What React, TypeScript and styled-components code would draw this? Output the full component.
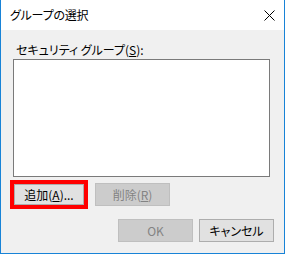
import React from 'react'
import styled, { createGlobalStyle } from 'styled-components'

const GlobalStyle = createGlobalStyle`
  html, body {
    margin: 0;
    padding: 0;
    background: #ffffff;
  }
  body {
    font-family: "Noto Sans CJK JP", "Noto Sans", sans-serif;
    font-feature-settings: "palt";
    font-size: 12px;
    color: #000000;
  }
`

const CloseIcon = () => (
  <svg width='11' height='11' viewBox='0 0 11 11'>
    <path d='M0.5 0.5 L10.5 10.5 M10.5 0.5 L0.5 10.5' stroke='#000' strokeWidth='1' fill='none' />
  </svg>
)

export default function App() {
  return (
    <>
      <GlobalStyle />
      <Div_Window>
        <Div_TitleBar>
          <Span_Title>グループの選択</Span_Title>
          <Div_Close>
            <CloseIcon />
          </Div_Close>
        </Div_TitleBar>
        <Div_Body>
          <Label_Field>
            セキュリティ グループ(<U>S</U>):
          </Label_Field>
          <Div_ListBox />
          <Div_ListActions>
            <Div_Highlight>
              <Button_Dialog $inner>
                追加(<U>A</U>)...
              </Button_Dialog>
            </Div_Highlight>
            <Button_Dialog disabled>
              削除(<U>R</U>)
            </Button_Dialog>
          </Div_ListActions>
          <Div_Footer>
            <Button_Dialog disabled>OK</Button_Dialog>
            <Button_Dialog>キャンセル</Button_Dialog>
          </Div_Footer>
        </Div_Body>
      </Div_Window>
    </>
  )
}

const Div_Window = styled.div`
  width: 285px;
  height: 254px;
  box-sizing: border-box;
  border: 1px solid #1883d7;
  border-top: none;
  display: flex;
  flex-direction: column;
  background: #f0f0f0;
`

const Div_TitleBar = styled.div`
  height: 30px;
  flex: 0 0 30px;
  background: #ffffff;
  display: flex;
  align-items: center;
  justify-content: space-between;
  padding: 0 9px 0 9px;
`

const Span_Title = styled.span`
  font-size: 12px;
  line-height: 30px;
  letter-spacing: -0.2px;
`

const Div_Close = styled.div`
  width: 11px;
  height: 11px;
  display: flex;
  margin-top: 1px;
`

const Div_Body = styled.div`
  flex: 1;
  display: flex;
  flex-direction: column;
  padding: 12px 12px 0 12px;
`

const Label_Field = styled.div`
  margin-left: 3px;
  line-height: 16px;
  height: 16px;
  white-space: nowrap;
`

const U = styled.span`
  text-decoration: underline;
  text-underline-offset: 1px;
`

const Div_ListBox = styled.div`
  margin-top: 1px;
  width: 257px;
  height: 118px;
  box-sizing: border-box;
  border: 1px solid #7a7a7a;
  background: #ffffff;
`

const Div_ListActions = styled.div`
  display: flex;
  align-items: center;
  gap: 7px;
  margin-top: 3px;
  margin-left: -3px;
`

const Div_Highlight = styled.div`
  border: 4px solid #ff0000;
  display: flex;
`

const Button_Dialog = styled.button<{ $inner?: boolean }>`
  width: ${(p) => (p.$inner ? '70px' : '75px')};
  height: ${(p) => (p.$inner ? '21px' : '23px')};
  box-sizing: border-box;
  margin: 0;
  padding: 0;
  border: 1px solid #adadad;
  background: #e1e1e1;
  font-family: inherit;
  font-feature-settings: "palt";
  font-size: 12px;
  line-height: 1;
  color: #000000;
  display: flex;
  align-items: center;
  justify-content: center;
  &:disabled {
    background: #cccccc;
    border-color: #bfbfbf;
    color: #838383;
  }
`

const Div_Footer = styled.div`
  display: flex;
  justify-content: flex-end;
  gap: 6px;
  margin-top: 10px;
  margin-right: -2px;
`
